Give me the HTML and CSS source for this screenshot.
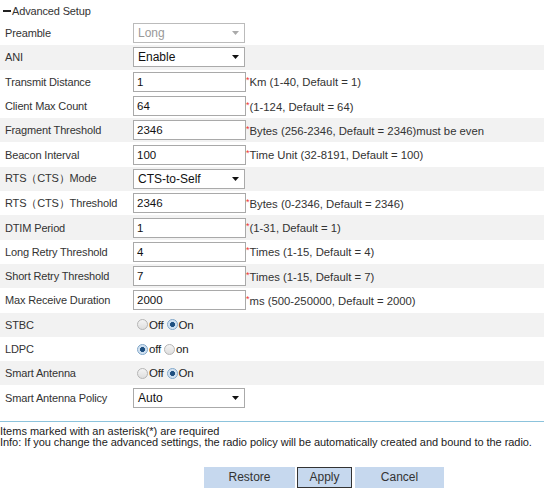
FILE: index.html
```html
<!DOCTYPE html>
<html>
<head>
<meta charset="utf-8">
<link rel="stylesheet" href="styles.css">
</head>
<body>
<div class="page">
  <div class="title"><span class="dash"></span>Advanced Setup</div>
  <div class="rows">
    <div class="row"><div class="label">Preamble</div><div class="ctl"><div class="select disabled"><span>Long</span><svg width="7" height="4" viewBox="0 0 7 4"><path d="M0 0H7L3.5 4Z"/></svg></div></div></div>
    <div class="row alt"><div class="label">ANI</div><div class="ctl"><div class="select"><span>Enable</span><svg width="7" height="4" viewBox="0 0 7 4"><path d="M0 0H7L3.5 4Z"/></svg></div></div></div>
    <div class="row"><div class="label">Transmit Distance</div><div class="ctl"><input class="field" value="1"><span class="note"><i>*</i>Km (1-40, Default = 1)</span></div></div>
    <div class="row"><div class="label">Client Max Count</div><div class="ctl"><input class="field" value="64"><span class="note"><i>*</i>(1-124, Default = 64)</span></div></div>
    <div class="row alt"><div class="label">Fragment Threshold</div><div class="ctl"><input class="field" value="2346"><span class="note"><i>*</i>Bytes (256-2346, Default = 2346)must be even</span></div></div>
    <div class="row"><div class="label">Beacon Interval</div><div class="ctl"><input class="field" value="100"><span class="note"><i>*</i>Time Unit (32-8191, Default = 100)</span></div></div>
    <div class="row alt"><div class="label">RTS（CTS）Mode</div><div class="ctl"><div class="select"><span>CTS-to-Self</span><svg width="7" height="4" viewBox="0 0 7 4"><path d="M0 0H7L3.5 4Z"/></svg></div></div></div>
    <div class="row"><div class="label">RTS（CTS）Threshold</div><div class="ctl"><input class="field" value="2346"><span class="note"><i>*</i>Bytes (0-2346, Default = 2346)</span></div></div>
    <div class="row alt"><div class="label">DTIM Period</div><div class="ctl"><input class="field" value="1"><span class="note"><i>*</i>(1-31, Default = 1)</span></div></div>
    <div class="row"><div class="label">Long Retry Threshold</div><div class="ctl"><input class="field" value="4"><span class="note"><i>*</i>Times (1-15, Default = 4)</span></div></div>
    <div class="row alt"><div class="label">Short Retry Threshold</div><div class="ctl"><input class="field" value="7"><span class="note"><i>*</i>Times (1-15, Default = 7)</span></div></div>
    <div class="row"><div class="label">Max Receive Duration</div><div class="ctl"><input class="field" value="2000"><span class="note"><i>*</i>ms (500-250000, Default = 2000)</span></div></div>
    <div class="row alt"><div class="label">STBC</div><div class="ctl radios"><span class="radio"></span><span class="rl">Off</span><span class="radio on"></span><span class="rl">On</span></div></div>
    <div class="row"><div class="label">LDPC</div><div class="ctl radios"><span class="radio on"></span><span class="rl">off</span><span class="radio"></span><span class="rl">on</span></div></div>
    <div class="row alt"><div class="label">Smart Antenna</div><div class="ctl radios"><span class="radio"></span><span class="rl">Off</span><span class="radio on"></span><span class="rl">On</span></div></div>
    <div class="row"><div class="label">Smart Antenna Policy</div><div class="ctl"><div class="select"><span>Auto</span><svg width="7" height="4" viewBox="0 0 7 4"><path d="M0 0H7L3.5 4Z"/></svg></div></div></div>
  </div>
  <div class="footer">
    <div class="info">Items marked with an asterisk(*) are required</div>
    <div class="info long">Info: If you change the advanced settings, the radio policy will be automatically created and bound to the radio.</div>
    <div class="buttons">
      <button class="btn restore">Restore</button>
      <button class="btn apply">Apply</button>
      <button class="btn cancel">Cancel</button>
    </div>
  </div>
</div>
</body>
</html>
```
FILE: styles.css
```css
html, body {
  margin: 0;
  padding: 0;
  background: #fff;
}
body {
  font-family: "Liberation Sans", Arial, sans-serif;
  font-size: 11px;
  color: #222;
}
.page {
  width: 544px;
}
.title {
  height: 21px;
  display: flex;
  align-items: center;
  padding-left: 3px;
  color: #333;
  letter-spacing: -0.15px;
}
.dash {
  display: inline-block;
  width: 8px;
  height: 2px;
  background: #222;
  margin-right: 1px;
}
.rows {
  display: flex;
  flex-direction: column;
}
.row {
  height: 24.3px;
  display: flex;
  align-items: center;
  padding-left: 5px;
}
.row.alt {
  background: #f2f2f2;
}
.label {
  width: 128px;
  flex: none;
  color: #333;
  font-size: 11px;
  letter-spacing: -0.15px;
}
.ctl {
  display: flex;
  align-items: center;
}
.select {
  box-sizing: border-box;
  width: 112px;
  height: 20px;
  border: 1px solid #aaa;
  background: #fff;
  display: flex;
  align-items: center;
  justify-content: space-between;
  padding: 0 5px 0 4px;
  font-size: 12px;
  color: #111;
}
.select svg path {
  fill: #111;
}
.select.disabled {
  color: #999;
  border-color: #bbb;
}
.select.disabled svg path {
  fill: #aaa;
}
.field {
  box-sizing: border-box;
  width: 113px;
  height: 20px;
  border: 1px solid #a9a9a9;
  margin: 0;
  padding: 0 3px;
  font-family: "Liberation Sans", Arial, sans-serif;
  font-size: 11.5px;
  color: #111;
  background: #fff;
  outline: none;
}
.note {
  color: #333;
  font-size: 11.3px;
}
.note i {
  font-style: normal;
  color: #e33;
  font-size: 9px;
  vertical-align: 3px;
}
.radios {
  padding-left: 4px;
}
.radio {
  box-sizing: border-box;
  width: 11px;
  height: 11px;
  border-radius: 50%;
  border: 1px solid #b5b5b5;
  background: linear-gradient(#f4f4f4, #dedede);
  margin-right: 1px;
}
.radio.on {
  border-color: #7fa6c9;
  background: radial-gradient(circle, #1e4f80 0 2.2px, #c9dcee 2.8px, #e8f0f8 100%);
}
.rl {
  color: #222;
  font-size: 11.5px;
  letter-spacing: -0.2px;
  margin-right: 3px;
}
.footer {
  margin-top: 11px;
  border-top: 1px solid #8cc3dc;
  padding-top: 4px;
}
.info {
  line-height: 11px;
  font-size: 11px;
  color: #222;
  white-space: nowrap;
}
.info.long {
  letter-spacing: -0.05px;
}
.buttons {
  display: flex;
  padding-left: 204px;
  margin-top: 19px;
}
.btn {
  box-sizing: border-box;
  height: 21px;
  border: 1px solid #c6d8ee;
  background: #c6d8ee;
  color: #333;
  font-family: "Liberation Sans", Arial, sans-serif;
  font-size: 12px;
  padding: 0;
}
.restore { width: 91px; margin-right: 2px; }
.apply { width: 55px; border: 1px solid #333; margin-right: 3px; }
.cancel { width: 89px; }
```
